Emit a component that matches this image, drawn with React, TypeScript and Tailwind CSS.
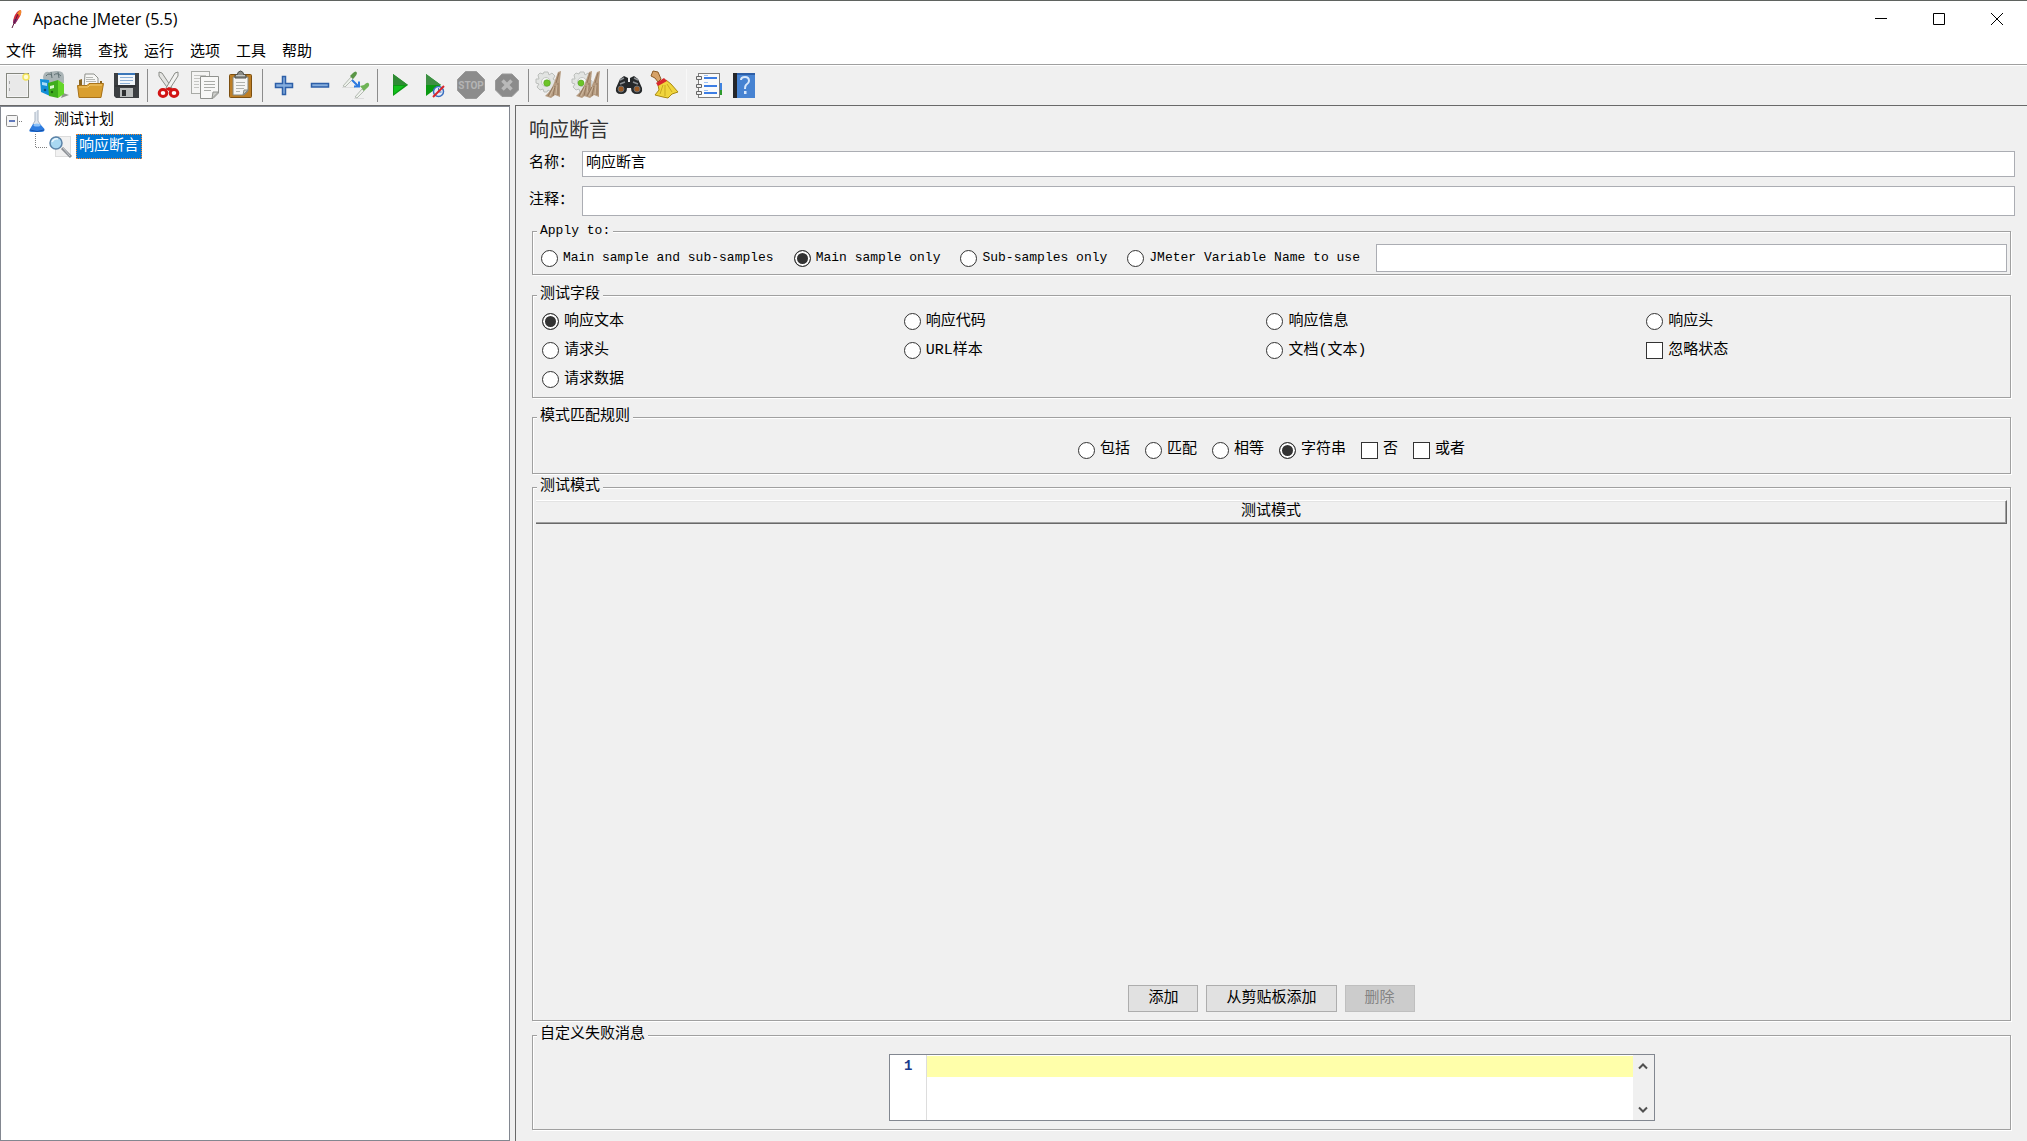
import React, { useState } from "react";
import clsx from "clsx";

const menuItems = ["文件", "编辑", "查找", "运行", "选项", "工具", "帮助"];

const fieldOptions = [
  "响应文本",
  "响应代码",
  "响应信息",
  "响应头",
  "请求头",
  "URL样本",
  "文档(文本)",
  "忽略状态",
  "请求数据",
];

const applyOptions = [
  "Main sample and sub-samples",
  "Main sample only",
  "Sub-samples only",
  "JMeter Variable Name to use",
];

const broomBristles = (
  <>
    <path d="M22 1 L25 0 L24 9 L24 26 L19 24 L15 27 L9 25 Q15 20 18 12 Z" fill="#b59b80" />
    <path
      d="M23 2 L20 12 M17 16 L12 25 M19 15 L17 25 M22 12 L22 24"
      stroke="#8a6f55"
      strokeWidth="0.800"
      fill="none"
    />
    <path d="M18 16 L14 25 M21 14 L20 23" stroke="#d3bfa6" strokeWidth="0.800" fill="none" />
  </>
);

const gearShape = (
  <>
    <path
      d="M7 3 L8 1 H12 L13 4 L16 2 L19 5 L17 8 L20 10 V14 L17 15 L18 18 L15 21 L12 19 L11 21 H8 L7 18 L4 19 L1 16 L3 13 L0 12 V8 L3 8 L2 4 L4 2 Z"
      fill="#e2e4e2"
      stroke="#bcbfbc"
    />
    <circle cx="10" cy="11" r="4.500" fill="#f6f6f6" stroke="#c4c7c4" />
  </>
);

const icons: Record<string, React.ReactNode> = {
  新建: (
    <>
      <rect x="2.500" y="2.500" width="22" height="24" fill="#f4f4f4" stroke="#85877f" />
      <rect x="4" y="4" width="19" height="21" fill="#e9e9e9" />
      <path d="M5.500 10v3M5.500 17v3" stroke="#aaa" />
      <circle cx="22" cy="6" r="3" fill="#fffbd0" stroke="#f2e35a" strokeWidth="1.500" />
    </>
  ),
  模板: (
    <>
      <path d="M3 6 Q4 0 9 1 L16 0 Q24 -1 24 6 L24 12 H4 Z" fill="#aab4b6" />
      <path d="M6 5q3-4 6 0M14 4q3-3 7 1M11 1l1 6M18 1l1 6" stroke="#5f7073" fill="none" />
      <path d="M0 8 L9 9 L10 25 L1 21 Z" fill="#1390d8" />
      <path d="M2 11 L7 12 V15 L2 14 Z" fill="#a9dcf8" />
      <circle cx="5" cy="19" r="1.300" fill="#0b4e80" />
      <path d="M23 22 l6 2-8 3z" fill="#8d948a" />
      <path d="M8 12 L18 9 V27 L9 25 Z" fill="#3fae1d" />
      <path d="M18 9 L24 13 V23 L18 27 Z" fill="#64d629" />
      <path d="M10 15 L14 14 V17 L10 18 Z" fill="#d9f7cc" />
      <circle cx="12" cy="21" r="1.200" fill="#1f6b10" />
    </>
  ),
  打开: (
    <>
      <path d="M3 9 L6 8 V14 H24 V10 L26 10 V24 H3 Z" fill="#8a6420" />
      <path d="M9 3 H18 L22 7 V17 H8 Z" fill="#f7f7f5" stroke="#8e908b" />
      <path d="M10 6.500h7M10 8.500h9M10 10.500h10" stroke="#b5b7b3" />
      <path d="M1.500 14.500 H11 L13 12.500 H27.500 L25 26.500 H3 Z" fill="#d99f30" stroke="#a9731a" />
      <path d="M3 16h9l2-2h12" stroke="#f4cc74" fill="none" />
    </>
  ),
  保存: (
    <>
      <path d="M2 2 H27 V27 H4 L2 25 Z" fill="#3c3f42" />
      <rect x="6" y="2" width="17" height="12" fill="#f2f6fa" />
      <rect x="6" y="2" width="17" height="2" fill="#3a76b8" />
      <path d="M8 6.500h13M8 9.500h13M8 12.500h10" stroke="#8db0d6" />
      <rect x="8" y="17" width="13" height="9" fill="#b9bcbc" />
      <rect x="10" y="19" width="4" height="6" fill="#2d2f31" />
      <path d="M3 15h21" stroke="#26282a" />
    </>
  ),
  剪切: (
    <>
      <path d="M4 1 L7 2 L17 17 L14 19 L4 5 Z" fill="#e4e4e2" stroke="#8b8d88" />
      <path d="M23 1 L20 2 L11 17 L14 19 L23 5 Z" fill="#f2f2f0" stroke="#8b8d88" />
      <ellipse cx="8" cy="22" rx="3.800" ry="3.500" fill="#fff" stroke="#d21414" strokeWidth="3" />
      <ellipse cx="19" cy="22" rx="3.800" ry="3.500" fill="#fff" stroke="#d21414" strokeWidth="3" />
      <path d="M10 18l4-2 4 2-4 2z" fill="#d21414" />
    </>
  ),
  复制: (
    <>
      <rect x="0.500" y="0.500" width="18" height="22" fill="#f4f4f3" stroke="#a8aaa6" />
      <path d="M3 4.500h12M3 7.500h12M3 10.500h5M3 13.500h5M3 16.500h5" stroke="#c4c5c2" />
      <path d="M9.500 5.500 H27.500 V22 L22 27.500 H9.500 Z" fill="#f8f8f7" stroke="#90928e" />
      <path d="M13 10.500h11M13 13.500h11M13 16.500h11M13 19.500h7" stroke="#a9aba7" />
      <path d="M27.500 21 H22 L21 27.500 Z" fill="#cfd0cd" stroke="#90928e" />
    </>
  ),
  粘贴: (
    <>
      <rect x="2.500" y="3.500" width="22" height="23" rx="1" fill="#bd7e25" stroke="#7c4f10" />
      <path d="M6 6 H21 V20 L17 24 H6 Z" fill="#f5f5f3" stroke="#85877f" />
      <path d="M9 11.500h9M9 14.500h9M9 17.500h8M9 20.500h4" stroke="#b0b2ae" />
      <path d="M21 19 H17 L16 24 Z" fill="#c7c8c4" stroke="#85877f" />
      <path d="M8 7 V4 H10 Q11 0 13.500 0 Q16 0 17 4 H19 V7 Z" fill="#8a8c88" stroke="#4e504c" />
      <path d="M9 4.500h9" stroke="#c6c8c4" />
    </>
  ),
  展开: (
    <path
      d="M12.500 5.500 h3 v7 h7 v4 h-7 v7 h-3 v-7 h-7 v-4 h7 z"
      fill="#86aede"
      stroke="#2d5fa8"
      strokeWidth="1.500"
    />
  ),
  折叠: <rect x="5.500" y="12.500" width="17" height="3.500" fill="#86aede" stroke="#2d5fa8" strokeWidth="1.500" />,
  切换: (
    <>
      <path d="M1 15 L9 6 L11 8 L3 16 Z" fill="#eef2ec" stroke="#b4bab2" />
      <path d="M8 5 L11 2 Q14 -1 15 2 Q15 4 12 7 L11 8 Z" fill="#5a9646" />
      <path d="M0 16.500 h13M12 27.500h10" stroke="#ddd" />
      <path d="M10 9 L16 15 M17 10.500 V15.500 H12" stroke="#2d7ae0" strokeWidth="2" fill="none" />
      <path d="M13 26 L20 18 L22 20 L15 27 Z" fill="#eef2ec" stroke="#b4bab2" />
      <path d="M18 15 L22 14 Q26 10 27 13 Q28 15 24 18 L22 20 Z" fill="#6eb356" />
    </>
  ),
  启动: (
    <>
      <path d="M8 3 L23 14 L8 25 Z" fill="#0a9a12" />
      <path d="M8 3 L23 14 H8 Z" fill="#2f8a34" />
      <path d="M9 15 H19 L9 23 Z" fill="#12c01c" />
    </>
  ),
  不停顿开始: (
    <>
      <path d="M5 3 L20 14 L5 25 Z" fill="#0a9a12" />
      <path d="M5 3 L20 14 H5 Z" fill="#3e8f44" />
      <circle cx="17.500" cy="20.500" r="5" fill="#e4ecf8" stroke="#3b6fc0" strokeWidth="1.500" />
      <path d="M17.500 17v4h3" stroke="#3b6fc0" fill="none" />
      <path d="M12 26 L23 15" stroke="#d8252a" strokeWidth="2" />
    </>
  ),
  停止: (
    <>
      <path
        d="M8.500 0.500 H19.500 L27.500 8.500 V19.500 L19.500 27.500 H8.500 L0.500 19.500 V8.500 Z"
        fill="#8c8c8c"
        stroke="#9a9a9a"
      />
      <text
        x="14"
        y="18"
        fontSize="10"
        fontWeight="bold"
        textAnchor="middle"
        fill="#b4b4b4"
        fontFamily="Roboto, sans-serif"
      >
        STOP
      </text>
    </>
  ),
  关闭: (
    <>
      <path d="M9 3 H19 L25.500 9.500 V19 L19 25.500 H9 L2.500 19 V9.500 Z" fill="#8b8b8b" stroke="#9a9a9a" />
      <path d="M9.500 9.500 l9 9 M18.500 9.500 l-9 9" stroke="#b9b9b9" strokeWidth="3.500" />
    </>
  ),
  清除: (
    <>
      {gearShape}
      {broomBristles}
      <circle cx="11" cy="12" r="3.300" fill="#6cc428" stroke="#4a9a14" strokeWidth="0.500" />
    </>
  ),
  清除全部: (
    <>
      {gearShape}
      <g transform="translate(-5 0)">{broomBristles}</g>
      <g transform="translate(3 0)">{broomBristles}</g>
      <circle cx="9" cy="12" r="3" fill="#6cc428" stroke="#4a9a14" strokeWidth="0.500" />
    </>
  ),
  搜索: (
    <>
      <path
        d="M5 8 L9 5 L13 7 V11 H15 V7 L19 5 L23 8 L27 17 Q28 23 22 23 Q16 23 16 17 H12 Q12 23 6 23 Q0 23 1 17 Z"
        fill="#25282a"
      />
      <path d="M5 9 L9 7M19 7l4 2M5 13l5-2M18 11l5 2" stroke="#8c9094" strokeWidth="1.500" />
      <circle cx="6" cy="18" r="3" fill="#9c5a24" stroke="#6d7174" />
      <circle cx="22" cy="18" r="3" fill="#9c5a24" stroke="#6d7174" />
    </>
  ),
  重置搜索: (
    <>
      <path d="M0 5 L2 0 L7 1 L10 8 L7 11 L4 7 Z" fill="#d6a268" stroke="#8b5a24" />
      <path d="M7 14 L15 9 L20 13 L27 21 L21 23 L17 27 L12 26 L4 24 L8 19 Z" fill="#f0d53c" stroke="#a88913" />
      <path d="M12 14 L9 23 M14 14 L14 25 M16 13 L21 21" stroke="#c9a91f" fill="none" />
      <path d="M5 12 L13 7 L16 10 L7 15 Z" fill="#d8282c" />
    </>
  ),
  函数助手: (
    <>
      <rect x="24" y="12" width="4" height="7" fill="#3f83e0" />
      <rect x="24" y="19" width="4" height="5" fill="#2c9a2c" />
      <rect x="4.500" y="2.500" width="21" height="24" fill="#fafafa" stroke="#7d7d7d" />
      <path d="M10 4.500h4M10 11.500h4M10 19.500h4" stroke="#9dc0f2" />
      <path d="M10 7h13M10 15h13M10 22h13" stroke="#3c7de4" strokeWidth="2" />
      <path d="M2.500 5.500h5v3h-5zM2.500 13.500h5v3h-5zM2.500 20.500h5v3h-5z" fill="#eee" stroke="#666" />
    </>
  ),
  帮助: (
    <>
      <rect x="3" y="2" width="22" height="25" fill="#4783d2" />
      <rect x="3" y="2" width="4" height="25" fill="#25262a" />
      <path d="M7 2h18v2H7z" fill="#2d5ea6" />
      <path d="M11 9 Q11 6 15 6 Q19 6 19 10 Q19 12 16 14 Q15 15 15 18" fill="none" stroke="#d9e8fb" strokeWidth="2" />
      <rect x="14" y="20" width="2.500" height="3" fill="#d9e8fb" />
    </>
  ),
};

const toolbarGroups = [
  ["新建", "模板", "打开", "保存"],
  ["剪切", "复制", "粘贴"],
  ["展开", "折叠", "切换"],
  ["启动", "不停顿开始", "停止", "关闭"],
  ["清除", "清除全部"],
  ["搜索", "重置搜索"],
  ["函数助手", "帮助"],
];

type ChoiceProps = {
  type?: "radio" | "checkbox";
  name: string;
  label: string;
  checked: boolean;
  onChange: () => void;
};

const Choice = ({ type = "radio", name, label, checked, onChange }: ChoiceProps) => (
  <label className="flex items-center gap-[5px]">
    <input
      type={type}
      name={name}
      checked={checked}
      onChange={onChange}
      className={clsx(
        "size-[17px] shrink-0 appearance-none border border-[#333] bg-white",
        type === "radio" && "rounded-full checked:bg-[#333] checked:shadow-[inset_0_0_0_2px_white]",
        type === "checkbox" && "checked:bg-[#333] checked:shadow-[inset_0_0_0_3px_white]",
      )}
    />
    {label}
  </label>
);

type GroupProps = {
  title: string;
  className?: string;
  children: React.ReactNode;
};

// Etched border with the title set into the top edge
const Group = ({ title, className, children }: GroupProps) => (
  <fieldset
    className={clsx(
      "mr-1 ml-0.5 min-w-0 border border-[#a0a0a0] shadow-[1px_1px_0_white,inset_1px_1px_0_white]",
      className,
    )}
  >
    <legend className="ml-1 bg-[#f0f0f0] px-[3px] leading-5">{title}</legend>
    {children}
  </fieldset>
);

const fieldClass = "min-w-0 flex-1 border border-[#abadb3] bg-white px-[3px] outline-none";
const buttonClass =
  "h-[27px] border border-[#adadad] bg-[#e1e1e1] px-[19px] disabled:border-[#bfbfbf] disabled:bg-[#ccc] disabled:text-[#838383]";

const App: React.FC = () => {
  const [name, setName] = useState("响应断言");
  const [comment, setComment] = useState("");
  const [variable, setVariable] = useState("");
  const [message, setMessage] = useState("");
  const [apply, setApply] = useState("Main sample only");
  const [field, setField] = useState("响应文本");
  const [rule, setRule] = useState("字符串");
  const [flags, setFlags] = useState<string[]>([]);

  const toggleFlag = (flag: string) =>
    setFlags((prev) => (prev.includes(flag) ? prev.filter((f) => f !== flag) : [...prev, flag]));

  return (
    <div className="flex min-h-screen flex-col bg-[#f0f0f0] font-['Liberation_Mono','Noto_Sans_CJK_SC',monospace] text-[15px] leading-5 text-black">
      <header className="border-t border-[#5f6360] bg-white font-['Open_Sans','Noto_Sans_CJK_SC',sans-serif]">
        <div className="flex h-9 items-center pl-2">
          <svg width="16" height="22" viewBox="0 0 16 22" aria-hidden="true">
            <path d="M13 2 Q14 5 11 10 L7 16 L5 15 Q5 9 9 4 Q11 2 13 2Z" fill="#d22a3c" />
            <path d="M13 2 Q14 5 12 8 L9 6 Q11 2 13 2Z" fill="#f08a2c" />
            <path d="M5 15 L7 16 L10 11 L6 11Z" fill="#7d2a78" />
            <path d="M10 6 L4 20" stroke="#5c1c3c" />
          </svg>
          <h1 className="ml-[9px] text-base">Apache JMeter (5.5)</h1>
          <div className="ml-auto flex items-center pr-px">
            {[
              { label: "最小化", d: "M3 8.500h12" },
              { label: "最大化", d: "M3.500 3.500h11v11h-11z" },
              { label: "关闭窗口", d: "M3 3l12 12M15 3l-12 12" },
            ].map(({ label, d }) => (
              <button key={label} aria-label={label} className="flex w-[58px] justify-center">
                <svg width="18" height="18" viewBox="0 0 18 18">
                  <path d={d} fill="none" stroke="black" />
                </svg>
              </button>
            ))}
          </div>
        </div>
        <nav className="flex h-[27px] gap-4 pt-[3px] pl-1.5">
          {menuItems.map((item) => (
            <button key={item} className="h-5">
              {item}
            </button>
          ))}
        </nav>
      </header>

      <div className="flex h-[41px] items-center border-t border-[#a0a0a0] shadow-[inset_0_1px_0_white]">
        {toolbarGroups.map((group, i) => (
          <React.Fragment key={group[0]}>
            {i > 0 && (
              <div
                className={clsx(
                  "mx-[3px] h-[33px] w-px",
                  i === toolbarGroups.length - 1 ? "bg-[#f8f8f8]" : "bg-[#8c8c8c]",
                )}
              />
            )}
            {group.map((id) => (
              <button key={id} aria-label={id} className="flex w-9 justify-center">
                <svg width="28" height="28" viewBox="0 0 28 28" overflow="visible">
                  {icons[id]}
                </svg>
              </button>
            ))}
          </React.Fragment>
        ))}
      </div>

      <div className="flex flex-1">
        <aside className="flex w-[510px] shrink-0 border-t border-[#696969]">
          <ul className="flex-1 border border-[#828790] bg-white pt-0.5 pl-[5px]">
            <li>
              <div className="flex h-6 items-center">
                <svg width="17" height="12" viewBox="0 0 17 12" aria-hidden="true">
                  <rect x="0.500" y="0.500" width="11" height="11" rx="1" fill="#f6f6f6" stroke="#8c8c8c" />
                  <path d="M3 6h6" stroke="#2f4fa8" strokeWidth="1.500" />
                  <path d="M13 6.500h4" stroke="#808080" strokeDasharray="1 1" />
                </svg>
                <svg className="ml-[5px]" width="18" height="24" viewBox="0 0 18 24" aria-hidden="true">
                  <path d="M7 3 L10 1 V12 L16 20 Q17 23 13 23 H4 Q0 23 2 20 L7 12 Z" fill="#dfe6ee" />
                  <path d="M7 3 V12 L5 15 M10 1 V12 L12 15" stroke="#a9b4c2" fill="none" />
                  <path d="M5 15 H12 L16.500 20 Q17 23 13 23 H4 Q0 23 2 20 Z" fill="#2f7de0" />
                  <ellipse cx="9" cy="16" rx="3.500" ry="1.500" fill="#8fc3f8" />
                  <path d="M2 21q7 3 14 0" stroke="#1450a8" fill="none" />
                </svg>
                <span className="ml-2">测试计划</span>
              </div>
              <ul>
                <li className="flex h-[26px] items-center pl-7">
                  <svg width="42" height="26" viewBox="0 0 42 26" aria-hidden="true">
                    <path d="M1.500 1v14M2 14.500h12" stroke="#808080" strokeDasharray="1 1" fill="none" />
                    <rect x="21.500" y="3.500" width="15" height="20" fill="#f1f1f1" stroke="#dcdcdc" />
                    <path d="M28 15 L37 24" stroke="#8b8f94" strokeWidth="3" />
                    <path d="M29 15 L36 23" stroke="#c9cdd2" />
                    <circle cx="22" cy="10" r="6" fill="#a9d8f2" stroke="#5b83a8" strokeWidth="1.500" />
                    <path d="M18 9q2-4 6-3" stroke="#eaf7ff" strokeWidth="1.500" fill="none" />
                  </svg>
                  <span className="border border-dotted border-[#ff8728] bg-[#0078d7] px-0.5 leading-[23px] text-white">
                    响应断言
                  </span>
                </li>
              </ul>
            </li>
          </ul>
        </aside>

        <main className="ml-[5px] flex min-w-0 flex-1 flex-col border-t border-l border-[#696969] pt-3 pr-3 pb-[11px] pl-[13px]">
          <h2 className="text-[20px] leading-7 text-[#333]">响应断言</h2>
          <div className="mt-[5px] flex h-[26px]">
            <label htmlFor="name" className="flex w-[53px] items-center">
              名称：
            </label>
            <input id="name" className={fieldClass} value={name} onChange={(e) => setName(e.target.value)} />
          </div>
          <div className="mt-[9px] flex h-[30px]">
            <label htmlFor="comment" className="flex w-[53px] items-center">
              注释：
            </label>
            <input id="comment" className={fieldClass} value={comment} onChange={(e) => setComment(e.target.value)} />
          </div>

          <div className="flex flex-1 flex-col pl-px">
            <Group title="Apply to:" className="mt-[5px] text-[13px]">
              <div className="flex h-[33px] gap-4 pt-[3px] pr-[3px] pb-0.5 pl-2">
                <div className="flex gap-5">
                  {applyOptions.map((option) => (
                    <Choice
                      key={option}
                      name="apply"
                      label={option}
                      checked={apply === option}
                      onChange={() => setApply(option)}
                    />
                  ))}
                </div>
                <input
                  aria-label="JMeter Variable Name"
                  className={fieldClass}
                  value={variable}
                  onChange={(e) => setVariable(e.target.value)}
                />
              </div>
            </Group>

            <Group title="测试字段" className="mt-2.5">
              <div className="grid auto-rows-[29px] grid-cols-[361fr_362fr_379fr_363fr] pt-0.5 pb-[3px] pl-[9px]">
                {fieldOptions.map((option) => {
                  const isFlag = option === "忽略状态";
                  return (
                    <Choice
                      key={option}
                      type={isFlag ? "checkbox" : "radio"}
                      name="field"
                      label={option}
                      checked={isFlag ? flags.includes(option) : field === option}
                      onChange={() => (isFlag ? toggleFlag(option) : setField(option))}
                    />
                  );
                })}
              </div>
            </Group>

            <Group title="模式匹配规则" className="mt-[9px]">
              <div className="flex h-[46px] items-center justify-center gap-[15px]">
                {["包括", "匹配", "相等", "字符串"].map((option) => (
                  <Choice
                    key={option}
                    name="rule"
                    label={option}
                    checked={rule === option}
                    onChange={() => setRule(option)}
                  />
                ))}
                {["否", "或者"].map((option) => (
                  <Choice
                    key={option}
                    type="checkbox"
                    name="rule-flag"
                    label={option}
                    checked={flags.includes(option)}
                    onChange={() => toggleFlag(option)}
                  />
                ))}
              </div>
            </Group>

            <Group title="测试模式" className="mt-[3px] flex flex-1 flex-col">
              <div className="flex-1 px-[3px] pt-[3px]">
                <table className="w-full border-separate border-spacing-0">
                  <thead>
                    <tr>
                      <th className="h-6 border-t border-r border-b border-t-white border-r-[#696969] border-b-[#696969] p-0 font-normal shadow-[inset_-1px_-1px_0_#a0a0a0,inset_0_1px_0_#e3e3e3]">
                        测试模式
                      </th>
                    </tr>
                  </thead>
                </table>
              </div>
              <div className="flex justify-center gap-2 pb-2">
                <button className={buttonClass}>添加</button>
                <button className={buttonClass}>从剪贴板添加</button>
                <button className={buttonClass} disabled>
                  删除
                </button>
              </div>
            </Group>

            <Group title="自定义失败消息" className="mt-1">
              <div className="flex justify-center pt-[9px] pb-2">
                <div className="flex h-[67px] w-[766px] border border-[#828790] bg-white">
                  <div className="w-[37px] border-r border-[#ddd] pr-[13px] text-right text-sm leading-[22px] font-bold text-[#1a3a8c]">
                    1
                  </div>
                  <textarea
                    aria-label="自定义失败消息"
                    className="mt-px flex-1 resize-none bg-linear-to-b from-[#ffffaa] from-[21px] to-white to-[21px] outline-none"
                    value={message}
                    onChange={(e) => setMessage(e.target.value)}
                  />
                  <div className="flex w-[21px] flex-col justify-between bg-[#f0f0f0] py-[5px]">
                    {[
                      { label: "向上滚动", d: "M6 8.500 L10 4.500 L14 8.500" },
                      { label: "向下滚动", d: "M6 4.500 L10 8.500 L14 4.500" },
                    ].map(({ label, d }) => (
                      <button key={label} aria-label={label}>
                        <svg width="21" height="12" viewBox="0 0 21 12">
                          <path d={d} fill="none" stroke="#505050" strokeWidth="2" />
                        </svg>
                      </button>
                    ))}
                  </div>
                </div>
              </div>
            </Group>
          </div>
        </main>
      </div>
    </div>
  );
};

export default App;
